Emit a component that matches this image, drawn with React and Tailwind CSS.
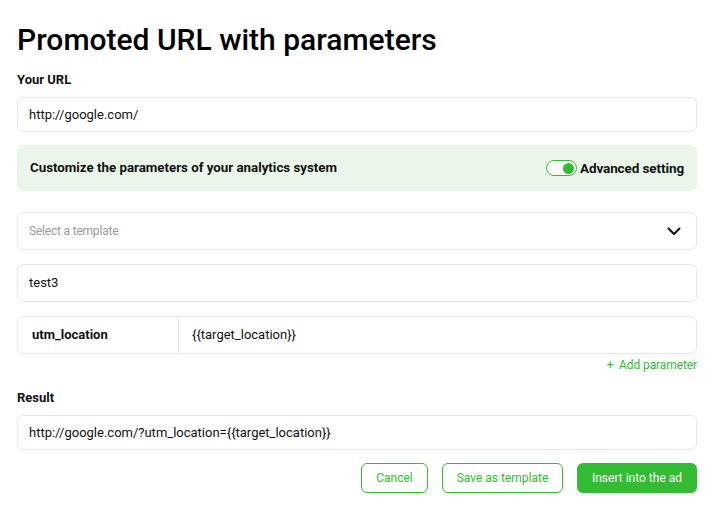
import React from 'react';

const Field = ({ children, className = '' }) => (
  <div className={`flex items-center rounded-[6px] border border-[#e6e6e6] bg-white px-[11px] text-[13px] text-[#111] ${className}`}>
    {children}
  </div>
);

export default function App() {
  return (
    <div className="min-h-[517px] w-[722px] bg-white pl-[17px] pr-[25px] pt-[22px] font-['Roboto',sans-serif] text-[#111]">
      <h1 className="text-[30px] font-medium leading-[36px] text-black">Promoted URL with parameters</h1>

      <div className="mt-[14px] text-[13px] font-bold leading-[16px]">Your URL</div>
      <Field className="mt-[9px] h-[35px]">http://google.com/</Field>

      {/* Bloco de configuração */}
      <div className="mt-[13px] flex h-[46px] items-center justify-between rounded-[6px] bg-[#e9f6e9] pl-[13px] pr-[13px]">
        <span className="text-[13.3px] font-bold">Customize the parameters of your analytics system</span>
        <label className="flex items-center gap-[3px]">
          <span className="flex h-[16px] w-[31px] items-center justify-end rounded-full border border-[#33bb33] bg-white pr-[2px]">
            <span className="h-[11px] w-[11px] rounded-full bg-[#33bb33]" />
          </span>
          <span className="text-[13.5px] font-bold tracking-[-0.1px]">Advanced setting</span>
        </label>
      </div>

      <Field className="mt-[21px] h-[38px] justify-between pr-[15px]">
        <span className="text-[12px] tracking-[-0.2px] text-[#9a9a9a]">Select a template</span>
        <svg width="14" height="9" viewBox="0 0 14 9" fill="none">
          <path d="M1.5 1.5L7 7L12.5 1.5" stroke="#111" strokeWidth="2" strokeLinecap="round" strokeLinejoin="round" />
        </svg>
      </Field>

      <Field className="mt-[14px] h-[38px]">test3</Field>

      {/* Parâmetros */}
      <div className="mt-[14px] flex h-[38px] rounded-[6px] border border-[#e6e6e6] text-[13px]">
        <div className="flex w-[161px] items-center border-r border-[#e6e6e6] pl-[14px] font-bold">utm_location</div>
        <div className="flex flex-1 items-center pl-[13px]">{'{{target_location}}'}</div>
      </div>
      <div className="mt-[4px] flex justify-end">
        <button className="text-[12px] leading-[14px] tracking-[-0.1px] text-[#33bb33]">+&nbsp; Add parameter</button>
      </div>

      <div className="mt-[18px] text-[13px] font-bold leading-[16px]">Result</div>
      <Field className="mt-[9px] h-[35px]">{'http://google.com/?utm_location={{target_location}}'}</Field>

      <div className="mt-[13px] flex justify-end gap-[14px] text-[12px]">
        <button className="h-[30px] w-[67px] rounded-[6px] border border-[#33bb33] text-[#33bb33]">Cancel</button>
        <button className="h-[30px] w-[121px] rounded-[6px] border border-[#33bb33] text-[#33bb33]">Save as template</button>
        <button className="h-[30px] w-[120px] rounded-[6px] bg-[#33bb33] text-white">Insert into the ad</button>
      </div>
    </div>
  );
}
